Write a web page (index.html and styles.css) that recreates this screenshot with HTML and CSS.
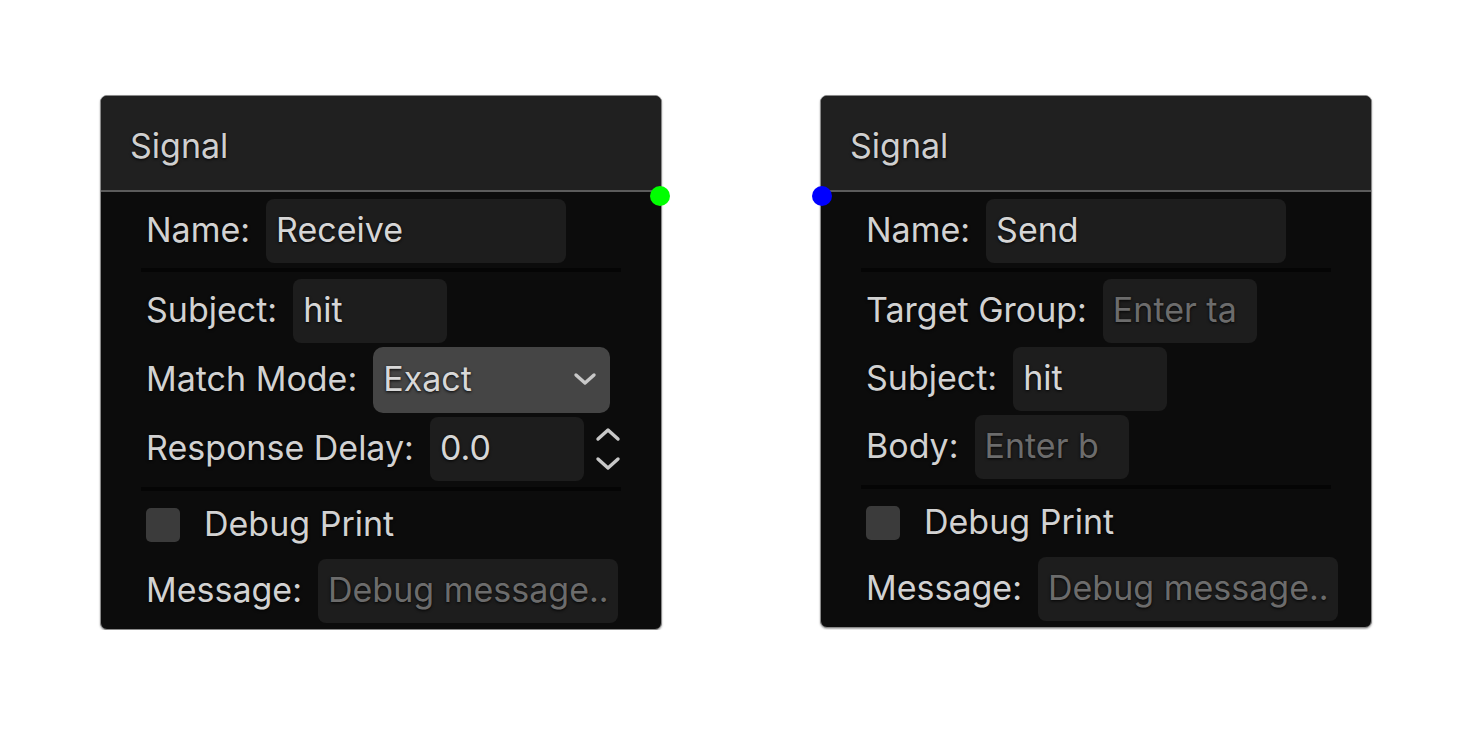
FILE: index.html
```html
<!DOCTYPE html>
<html lang="en">
<head>
    <meta charset="UTF-8">
    <meta name="viewport" content="width=device-width, initial-scale=1.0">
    <title>Signal nodes</title>
    <link rel="stylesheet" href="styles.css">
</head>
<body>
    <div class="canvas">
        <!-- Receive node, output socket on the right -->
        <div class="node node-receive">
            <div class="node-header">Signal</div>
            <span class="socket socket-out"></span>
            <div class="node-body">
                <div class="row">
                    <span class="label">Name:</span>
                    <div class="field wide">Receive</div>
                </div>
                <div class="separator"></div>
                <div class="row">
                    <span class="label">Subject:</span>
                    <div class="field">hit</div>
                </div>
                <div class="row">
                    <span class="label">Match Mode:</span>
                    <div class="dropdown">
                        <span>Exact</span>
                        <svg width="24" height="14" viewBox="0 0 24 14"><path d="M3 3 L12 11 L21 3" fill="none" stroke="#c8c8c8" stroke-width="3.4" stroke-linecap="round" stroke-linejoin="round"/></svg>
                    </div>
                </div>
                <div class="row">
                    <span class="label">Response Delay:</span>
                    <div class="field">0.0</div>
                    <div class="spinner">
                        <svg width="26" height="16" viewBox="0 0 26 16"><path d="M3 13 L13 4 L23 13" fill="none" stroke="#c8c8c8" stroke-width="3.4" stroke-linecap="round" stroke-linejoin="round"/></svg>
                        <svg width="26" height="16" viewBox="0 0 26 16"><path d="M3 3 L13 12 L23 3" fill="none" stroke="#c8c8c8" stroke-width="3.4" stroke-linecap="round" stroke-linejoin="round"/></svg>
                    </div>
                </div>
                <div class="separator sep-lower"></div>
                <div class="row check-row">
                    <span class="checkbox"></span>
                    <span class="label">Debug Print</span>
                </div>
                <div class="row">
                    <span class="label">Message:</span>
                    <div class="field wide placeholder">Debug message..</div>
                </div>
            </div>
        </div>

        <!-- Send node, input socket on the left -->
        <div class="node node-send">
            <div class="node-header">Signal</div>
            <span class="socket socket-in"></span>
            <div class="node-body">
                <div class="row">
                    <span class="label">Name:</span>
                    <div class="field wide">Send</div>
                </div>
                <div class="separator"></div>
                <div class="row">
                    <span class="label">Target Group:</span>
                    <div class="field placeholder">Enter ta</div>
                </div>
                <div class="row">
                    <span class="label">Subject:</span>
                    <div class="field">hit</div>
                </div>
                <div class="row">
                    <span class="label">Body:</span>
                    <div class="field placeholder">Enter b</div>
                </div>
                <div class="separator sep-lower"></div>
                <div class="row check-row">
                    <span class="checkbox"></span>
                    <span class="label">Debug Print</span>
                </div>
                <div class="row">
                    <span class="label">Message:</span>
                    <div class="field wide placeholder">Debug message..</div>
                </div>
            </div>
        </div>
    </div>
</body>
</html>
```

FILE: styles.css
```css
body {
    margin: 0;
    background-color: #ffffff;
    font-family: Inter, "Noto Sans", sans-serif;
}
.canvas {
    display: flex;
    align-items: flex-start;
    gap: 158px;
    padding: 95px 0 0 100px;
}
.node {
    position: relative;
    background-color: #0c0c0c;
    border: 1px solid #8a8a8a;
    border-radius: 7px;
    box-shadow: 0 1px 2px rgba(0, 0, 0, 0.35);
}
.node-receive {
    width: 560px;
}
.node-send {
    width: 550px;
}
.node-header {
    height: 96px;
    box-sizing: border-box;
    padding: 4px 0 0 29px;
    display: flex;
    align-items: center;
    background-color: #202020;
    border-bottom: 2px solid #5c5c5c;
    border-radius: 6px 6px 0 0;
    color: #cfcfcf;
    font-size: 34px;
    text-shadow: 0 1px 3px rgba(0, 0, 0, 0.9);
}
.socket {
    position: absolute;
    top: 90px;
    width: 20px;
    height: 20px;
    border-radius: 50%;
}
.socket-out {
    right: -9px;
    background-color: #00ff00;
}
.socket-in {
    left: -9px;
    background-color: #0000ff;
}
.node-body {
    display: flex;
    flex-direction: column;
    gap: 4px;
    padding: 7px 40px 6px;
}
.row {
    display: flex;
    align-items: center;
    gap: 16px;
    padding-left: 5px;
    min-height: 64px;
}
.label {
    padding-bottom: 3px;
    color: #d2d2d2;
    font-size: 34px;
    white-space: nowrap;
    text-shadow: 0 1px 3px rgba(0, 0, 0, 0.9);
}
.field {
    flex-shrink: 0;
    width: 154px;
    height: 64px;
    box-sizing: border-box;
    padding: 0 0 3px 10px;
    display: flex;
    align-items: center;
    background-color: #1d1d1d;
    border-radius: 8px;
    color: #d6d6d6;
    font-size: 34px;
    white-space: nowrap;
    overflow: hidden;
    text-shadow: 0 1px 3px rgba(0, 0, 0, 0.9);
}
.field.wide {
    width: 300px;
}
.field.placeholder {
    color: #6c6c6c;
}
.dropdown {
    flex-shrink: 0;
    width: 237px;
    height: 66px;
    box-sizing: border-box;
    padding: 0 13px 3px 10px;
    display: flex;
    align-items: center;
    justify-content: space-between;
    background-color: #454545;
    border-radius: 10px;
    color: #d8d8d8;
    font-size: 34px;
    text-shadow: 0 1px 3px rgba(0, 0, 0, 0.9);
}
.spinner {
    display: flex;
    flex-direction: column;
    gap: 14px;
    margin-left: -5px;
}
.spinner svg {
    display: block;
}
.separator {
    height: 4px;
    background-color: #050505;
    margin: 1px 0 3px;
}
.sep-lower {
    margin: 2px 0 0;
}
.check-row {
    gap: 24px;
    min-height: 60px;
}
.checkbox {
    width: 34px;
    height: 34px;
    background-color: #3b3b3b;
    border-radius: 5px;
}
```
